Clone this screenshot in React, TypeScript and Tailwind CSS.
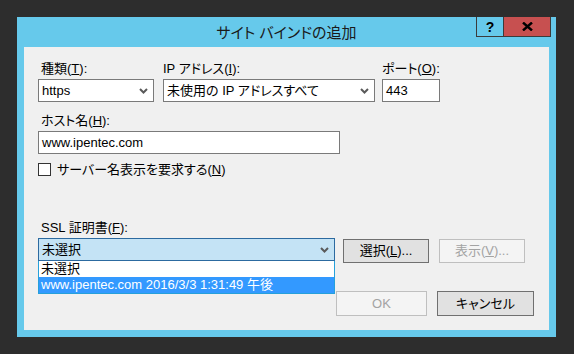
import React from 'react';

const font = "font-['Liberation_Sans','Noto_Sans_CJK_JP',sans-serif] [font-feature-settings:'palt']";

function Chevron() {
  return (
    <svg width="9" height="6" viewBox="0 0 9 6" className="shrink-0">
      <path d="M1 1l3.5 3.5L8 1" fill="none" stroke="#5a5a5a" strokeWidth="2" />
    </svg>
  );
}

export default function App() {
  return (
    <div className={`w-[574px] h-[354px] bg-[#2d2d2d] pt-[17px] pl-[17px] ${font} text-[13px] text-black`}>
      {/* window */}
      <div className="w-[539px] h-[320px] bg-[#66c9eb] flex flex-col">
        {/* title bar */}
        <div className="relative h-[30px] flex items-center justify-center">
          <span className="text-[15px] text-[#1a1a1a] mt-[2px]">サイト バインドの追加</span>
          <div className="absolute top-0 right-[5px] flex">
            <div className="w-[28px] h-[20px] border border-t-0 border-[#3b3b3b] flex items-center justify-center text-[14px] font-bold leading-none">
              ?
            </div>
            <div className="w-[47px] h-[20px] bg-[#c75050] border-b border-r border-[#3b3b3b] flex items-center justify-center">
              <svg width="11" height="9" viewBox="0 0 11 9">
                <path d="M1 0.5l9 8M10 0.5l-9 8" stroke="#000" strokeWidth="2.4" />
              </svg>
            </div>
          </div>
        </div>

        {/* client */}
        <div className="mx-[7px] h-[283px] bg-[#f0f0f0] pl-[14px] pt-[14px] flex flex-col">
          {/* row 1 */}
          <div className="flex">
            <div className="w-[116px] flex flex-col">
              <div className="h-[18px] pl-[3px] leading-[16px]">
                種類(<u>T</u>):
              </div>
              <div className="h-[23px] bg-white border border-[#7a7a7a] flex items-center justify-between pl-[3px] pr-[5px]">
                <span>https</span>
                <Chevron />
              </div>
            </div>
            <div className="w-[212px] ml-[9px] flex flex-col">
              <div className="h-[18px] leading-[16px]">
                IP アドレス(<u>I</u>):
              </div>
              <div className="h-[23px] bg-white border border-[#7a7a7a] flex items-center justify-between pl-[3px] pr-[5px]">
                <span>未使用の IP アドレスすべて</span>
                <Chevron />
              </div>
            </div>
            <div className="w-[58px] ml-[7px] flex flex-col">
              <div className="h-[18px] leading-[16px]">
                ポート(<u>O</u>):
              </div>
              <div className="h-[23px] bg-white border border-[#7a7a7a] flex items-center pl-[3px]">443</div>
            </div>
          </div>

          {/* host name */}
          <div className="mt-[11px] h-[18px] pl-[3px] leading-[16px]">
            ホスト名(<u>H</u>):
          </div>
          <div className="w-[302px] h-[23px] bg-white border border-[#7a7a7a] flex items-center pl-[3px]">
            www.ipentec.com
          </div>

          {/* checkbox */}
          <div className="mt-[9px] h-[13px] flex items-center">
            <div className="w-[13px] h-[13px] bg-white border border-[#333]" />
            <span className="ml-[6px]">
              サーバー名表示を要求する(<u>N</u>)
            </span>
          </div>

          {/* ssl */}
          <div className="mt-[44px] h-[18px] pl-[3px] leading-[16px]">
            SSL 証明書(<u>F</u>):
          </div>
          <div className="flex items-start h-[25px]">
            <div className="relative w-[297px]">
              <div className="h-[23px] bg-[#c4e3f5] border border-[#2c6aa0] flex items-center justify-between pl-[3px] pr-[5px]">
                <span>未選択</span>
                <Chevron />
              </div>
              {/* drop-down list */}
              <div className="absolute left-0 top-[23px] w-[297px] border border-t-0 border-[#26a0da] bg-white flex flex-col">
                <div className="h-[16px] leading-[16px] pl-[2px]">未選択</div>
                <div className="h-[16px] leading-[16px] pl-[2px] bg-[#3399ff] text-white">
                  www.ipentec.com 2016/3/3 1:31:49 午後
                </div>
              </div>
            </div>
            <div className="ml-[8px] mt-[1px] w-[86px] h-[24px] bg-[#e1e1e1] border border-[#707070] flex items-center justify-center">
              選択(<u>L</u>)...
            </div>
            <div className="ml-[10px] mt-[1px] w-[86px] h-[24px] bg-[#f4f4f4] border border-[#bfbfbf] text-[#a3a3a3] flex items-center justify-center">
              表示(<u>V</u>)...
            </div>
          </div>

          {/* ok / cancel */}
          <div className="mt-[28px] flex justify-end pr-[15px]">
            <div className="w-[91px] h-[25px] bg-[#f4f4f4] border border-[#bfbfbf] text-[#a3a3a3] flex items-center justify-center">
              OK
            </div>
            <div className="ml-[10px] w-[97px] h-[25px] bg-[#e1e1e1] border border-[#707070] flex items-center justify-center">
              キャンセル
            </div>
          </div>
        </div>
      </div>
    </div>
  );
}
